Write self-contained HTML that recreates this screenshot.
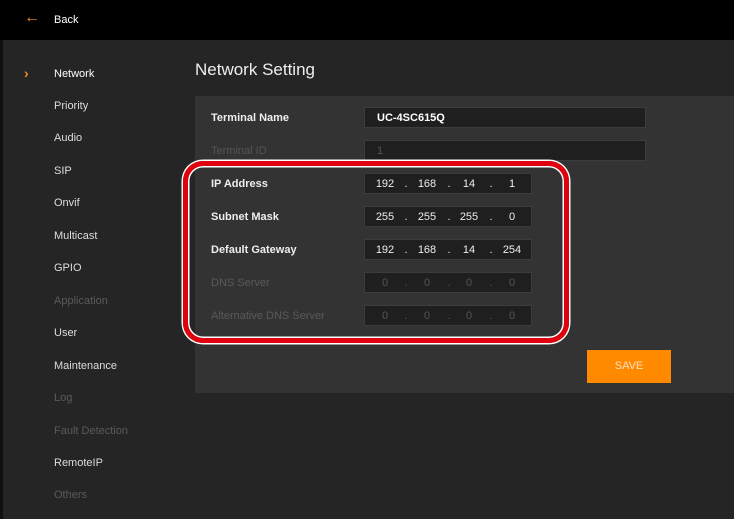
<!DOCTYPE html><html><head><style>
body{margin:0;width:734px;height:519px;background:#252525;font-family:"Liberation Sans",sans-serif;position:relative;overflow:hidden;font-size:11px}
.a{position:absolute}
.top{left:0;top:0;width:734px;height:40px;background:#000}
.nav{color:#ddd;left:54px}
.dim{color:#5a5a5a}
.panel{left:195px;top:96px;width:539px;height:297px;background:#333}
.lbl{left:211px;color:#eee;font-weight:bold}
.inp{background:#1f1f1f;border:1px solid #3c3c3c;height:21px;box-sizing:border-box}
.ip{left:364px;width:168px}
.ip span{position:absolute;top:4px;color:#eee;font-size:11px;text-align:center;width:30px}
.g span{color:#555}
</style></head><body>
<div class="a" style="left:0;top:40px;width:3px;height:479px;background:#111"></div>
<div class="a top"></div>
<div class="a" style="left:24px;top:9px;color:#f58a1f;font-size:16px">←</div>
<div class="a" style="left:54px;top:14px;color:#fff">Back</div>
<div class="a" style="left:24px;top:65px;color:#f58a1f;font-weight:bold;font-size:14px">›</div>
<div class="a nav" style="top:68px;color:#fff">Network</div>
<div class="a nav" style="top:100px">Priority</div>
<div class="a nav" style="top:132px">Audio</div>
<div class="a nav" style="top:165px">SIP</div>
<div class="a nav" style="top:197px">Onvif</div>
<div class="a nav" style="top:230px">Multicast</div>
<div class="a nav" style="top:262px">GPIO</div>
<div class="a nav dim" style="top:295px">Application</div>
<div class="a nav" style="top:327px">User</div>
<div class="a nav" style="top:360px">Maintenance</div>
<div class="a nav dim" style="top:392px">Log</div>
<div class="a nav dim" style="top:425px">Fault Detection</div>
<div class="a nav" style="top:457px">RemoteIP</div>
<div class="a nav dim" style="top:489px">Others</div>
<div class="a" style="left:195px;top:60px;color:#eee;font-size:17px">Network Setting</div>
<div class="a panel"></div>
<div class="a lbl" style="top:112px">Terminal Name</div>
<div class="a inp" style="left:364px;top:107px;width:282px"><span style="position:absolute;left:12px;top:4px;color:#fff;font-weight:bold">UC-4SC615Q</span></div>
<div class="a lbl" style="top:145px;color:#555;font-weight:normal">Terminal ID</div>
<div class="a inp" style="left:364px;top:140px;width:282px"><span style="position:absolute;left:12px;top:4px;color:#555">1</span></div>
<div class="a" style="left:183px;top:161px;width:386px;height:182px;border:5px solid #e0000e;border-radius:20px;box-shadow:0 0 0 1.5px #fff,inset 0 0 0 1.5px #fff;box-sizing:border-box"></div>
<div class="a lbl" style="top:178px">IP Address</div>
<div class="a lbl" style="top:211px">Subnet Mask</div>
<div class="a lbl" style="top:244px">Default Gateway</div>
<div class="a lbl" style="top:277px;color:#5a5a5a;font-weight:normal">DNS Server</div>
<div class="a lbl" style="top:310px;color:#5a5a5a;font-weight:normal">Alternative DNS Server</div>
<div class="a inp ip" style="top:173px"><span style="left:5px">192</span><span style="left:26px">.</span><span style="left:47px">168</span><span style="left:69px">.</span><span style="left:89px">14</span><span style="left:111px">.</span><span style="left:132px">1</span></div>
<div class="a inp ip" style="top:206px"><span style="left:5px">255</span><span style="left:26px">.</span><span style="left:47px">255</span><span style="left:69px">.</span><span style="left:89px">255</span><span style="left:111px">.</span><span style="left:132px">0</span></div>
<div class="a inp ip" style="top:239px"><span style="left:5px">192</span><span style="left:26px">.</span><span style="left:47px">168</span><span style="left:69px">.</span><span style="left:89px">14</span><span style="left:111px">.</span><span style="left:132px">254</span></div>
<div class="a inp ip g" style="top:272px"><span style="left:5px">0</span><span style="left:26px">.</span><span style="left:47px">0</span><span style="left:69px">.</span><span style="left:89px">0</span><span style="left:111px">.</span><span style="left:132px">0</span></div>
<div class="a inp ip g" style="top:305px"><span style="left:5px">0</span><span style="left:26px">.</span><span style="left:47px">0</span><span style="left:69px">.</span><span style="left:89px">0</span><span style="left:111px">.</span><span style="left:132px">0</span></div>
<div class="a" style="left:587px;top:350px;width:84px;height:33px;background:#ff8a00;color:#ffe0c0;text-align:center;line-height:33px;font-size:11px">SAVE</div>
</body></html>
